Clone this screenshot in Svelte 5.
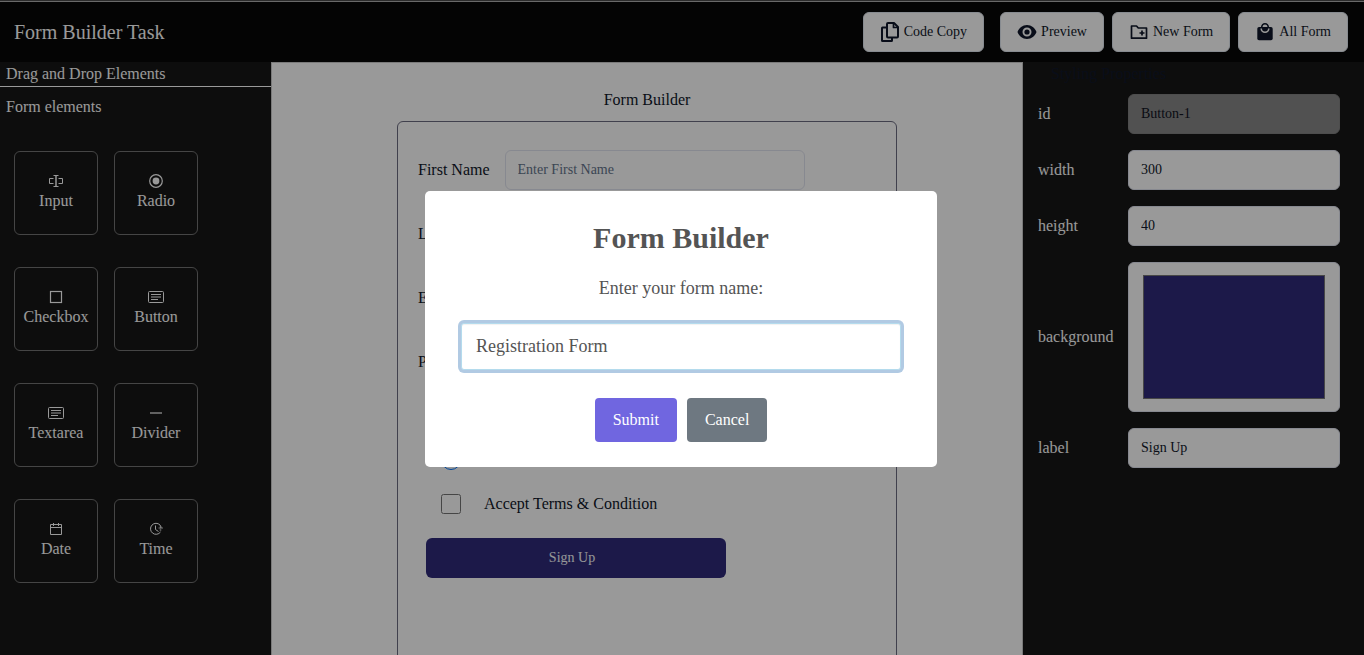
<script>
  const elements = [
    { name: 'Input', icon: 'input' },
    { name: 'Radio', icon: 'radio' },
    { name: 'Checkbox', icon: 'checkbox' },
    { name: 'Button', icon: 'card' },
    { name: 'Textarea', icon: 'card' },
    { name: 'Divider', icon: 'divider' },
    { name: 'Date', icon: 'date' },
    { name: 'Time', icon: 'time' }
  ];

  const fields = [
    { id: 'first-name', label: 'First Name', type: 'text' },
    { id: 'last-name', label: 'Last Name', type: 'text' },
    { id: 'email', label: 'Email', type: 'email' },
    { id: 'password', label: 'Password', type: 'password' }
  ];

  let props = $state({ id: 'Button-1', width: '300', height: '40', background: '#2f2b7b', label: 'Sign Up' });
  let formName = $state('Registration Form');
  let gender = $state('Female');
</script>

<div class="app">
  <header class="topbar">
    <h1>Form Builder Task</h1>
    <nav class="actions">
      <button class="action spaced" type="button">
        <svg viewBox="0 0 20 20" fill="none" stroke="currentColor" stroke-width="2" stroke-linejoin="round">
          <path d="M6 5.500H2.500Q2 5.500 2 6V18.500Q2 19 2.500 19H11.500Q12 19 12 18.500V16" />
          <path d="M8 1H14L18 5V14.500Q18 15.500 17 15.500H8Q7 15.500 7 14.500V2Q7 1 8 1Z" />
          <path d="M13.500 1V5.500H18" stroke-width="1.700" />
        </svg>
        Code Copy
      </button>
      <button class="action" type="button">
        <svg viewBox="0 0 20 20" fill="currentColor">
          <path fill-rule="evenodd" d="M10 3C5.500 3 2 6 .5 10 2 14 5.500 17 10 17S18 14 19.500 10C18 6 14.500 3 10 3ZM10 14.500A4.500 4.500 0 1 1 10 5.500 4.500 4.500 0 0 1 10 14.500Z" />
          <circle cx="10" cy="10" r="2.600" />
        </svg>
        Preview
      </button>
      <button class="action" type="button">
        <svg viewBox="0 0 20 20" fill="none" stroke="currentColor" stroke-width="1.700" stroke-linejoin="round">
          <path d="M2.500 4H7.500L9.300 6H17.500V16.200H2.500Z" />
          <path d="M13 8.500V13.500M10.500 11H15.500" />
        </svg>
        New Form
      </button>
      <button class="action" type="button">
        <svg viewBox="0 0 20 20">
          <path fill="currentColor" d="M4 5H16Q17.700 5 17.700 6.700V16.500Q17.700 18.200 16 18.200H4Q2.300 18.200 2.300 16.500V6.700Q2.300 5 4 5Z" />
          <path fill="none" stroke="currentColor" stroke-width="1.600" d="M6.700 5.500A3.300 3.800 0 0 1 13.300 5.500" />
          <path class="handle" fill="none" stroke-width="1.600" d="M6.200 6.500A3.800 3.800 0 0 0 13.800 6.500" />
        </svg>
        All Form
      </button>
    </nav>
  </header>

  <div class="workspace">
    <aside class="palette">
      <h2>Drag and Drop Elements</h2>
      <h3>Form elements</h3>
      <div class="tiles">
        {#each elements as el}
          <button class="tile" type="button" draggable="true">
            <svg viewBox="0 0 16 16" fill="none" stroke="currentColor">
              {#if el.icon === 'input'}
                <path d="M5.500 5.500H1.500V10.500H5.500M10.500 5.500H14.500V10.500H10.500M5.500 2.500H10.500M5.500 13.500H10.500" />
                <path d="M8 2.500V13.500" stroke-width="1.500" />
              {:else if el.icon === 'radio'}
                <circle cx="8" cy="8" r="6.300" stroke-width="1.200" />
                <circle cx="8" cy="8" r="3.400" fill="currentColor" stroke="none" />
              {:else if el.icon === 'checkbox'}
                <rect x="2.500" y="2.500" width="11" height="11" stroke-width="1.200" />
              {:else if el.icon === 'card'}
                <rect x=".5" y="2.500" width="15" height="11" rx="1" />
                <path d="M3 5.500H13M3 10.500H10" />
                <path d="M3 8H13" stroke-width="2" opacity=".5" />
              {:else if el.icon === 'divider'}
                <path d="M2 8H14" stroke-width="2" opacity=".6" />
              {:else if el.icon === 'date'}
                <path d="M2.500 3.500H13.500V13.500H2.500ZM2.500 6.500H13.500M5.500 2V5M10.500 2V5" />
              {:else}
                <path d="M12 4A5.500 5.500 0 1 0 12.500 11M7.500 4.500V8.500L10.500 10.500M12 4Q13 5.500 13 7" />
                <path d="M10.500 7H15M12.500 5V10" stroke-width="1.500" opacity=".5" />
              {/if}
            </svg>
            <span>{el.name}</span>
          </button>
        {/each}
      </div>
    </aside>

    <main class="canvas">
      <h2>Form Builder</h2>
      <form class="sheet">
        {#each fields as field}
          <div class="field">
            <label for={field.id}>{field.label}</label>
            <input class="box" id={field.id} type={field.type} placeholder="Enter {field.label}" />
          </div>
        {/each}
        {#each ['Male', 'Female'] as option}
          <label class="choice">
            <input type="radio" name="gender" value={option} bind:group={gender} />
            <span>{option}</span>
          </label>
        {/each}
        <label class="choice">
          <input type="checkbox" />
          <span>Accept Terms &amp; Condition</span>
        </label>
        <button
          class="signup"
          type="button"
          style="width: {props.width}px; height: {props.height}px; background: {props.background}"
        >{props.label}</button>
      </form>
    </main>

    <aside class="inspector">
      <h2>Styling Properties</h2>
      <div class="property">
        <label for="prop-id">id</label>
        <input class="box" id="prop-id" value={props.id} disabled />
      </div>
      <div class="property">
        <label for="prop-width">width</label>
        <input class="box" id="prop-width" bind:value={props.width} />
      </div>
      <div class="property">
        <label for="prop-height">height</label>
        <input class="box" id="prop-height" bind:value={props.height} />
      </div>
      <div class="property">
        <label for="prop-background">background</label>
        <input class="box color" id="prop-background" type="color" bind:value={props.background} />
      </div>
      <div class="property">
        <label for="prop-label">label</label>
        <input class="box" id="prop-label" bind:value={props.label} />
      </div>
    </aside>
  </div>
</div>

<div class="overlay">
  <div class="dialog" role="dialog" aria-modal="true" aria-labelledby="dialog-title">
    <h2 id="dialog-title">Form Builder</h2>
    <label for="form-name">Enter your form name:</label>
    <input id="form-name" type="text" bind:value={formName} />
    <div class="dialog-actions">
      <button class="submit" type="button">Submit</button>
      <button class="cancel" type="button">Cancel</button>
    </div>
  </div>
</div>

<style>
  :global(body) {
    margin: 0;
    background: #171717;
  }

  .app,
  .overlay {
    font-family: 'Liberation Serif', serif;
    font-size: 16px;
    line-height: 24px;
  }

  .app *,
  .overlay * {
    box-sizing: border-box;
  }

  h1,
  h2,
  h3 {
    margin: 0;
    font-size: 16px;
    font-weight: 400;
  }

  button,
  input {
    font-family: inherit;
    margin: 0;
  }

  .app {
    display: flex;
    flex-direction: column;
    height: 100vh;
    overflow: hidden;
    color: #0f172a;
    box-sizing: border-box;
    border-top: 1px solid #4a4a4a;
  }

  .topbar {
    display: flex;
    align-items: center;
    justify-content: space-between;
    padding: 10px 16px 10px 14px;
    background: #080808;
    border-top: 1px solid #b0b0b0;
  }

  .topbar h1 {
    color: #fff;
    font-size: 20px;
  }

  .actions {
    display: flex;
    gap: 8px;
  }

  .action {
    display: flex;
    align-items: center;
    gap: 4px;
    height: 40px;
    padding: 0 16px;
    border: 1px solid #e2e8f0;
    border-radius: 6px;
    background: #fff;
    color: #0f172a;
    font-size: 14px;
    line-height: 20px;
    white-space: nowrap;
  }

  .action svg {
    width: 20px;
    height: 20px;
  }

  .spaced {
    margin-right: 8px;
  }

  .handle {
    stroke: #fff;
  }

  .workspace {
    display: grid;
    grid-template-columns: 271px 1fr 25%;
    flex: 1;
    min-height: 0;
  }

  .palette,
  .inspector {
    background: #171717;
    color: #fff;
  }

  .palette h2 {
    padding-left: 6px;
    border-bottom: 1px solid #fff;
  }

  .palette h3 {
    padding: 8px 6px;
  }

  .tiles {
    display: grid;
    grid-template-columns: 84px 84px;
    gap: 32px 16px;
    padding: 24px 14px;
  }

  .tile {
    display: flex;
    flex-direction: column;
    align-items: center;
    justify-content: center;
    height: 84px;
    padding: 0;
    border: 1px solid #737373;
    border-radius: 6px;
    background: none;
    color: #fff;
    font-size: 16px;
    line-height: 24px;
  }

  .tile svg {
    width: 16px;
    height: 16px;
  }

  .canvas {
    display: flex;
    flex-direction: column;
    align-items: center;
    gap: 9px;
    overflow: hidden;
    padding-top: 25px;
    border: 1px solid #ccc;
    border-bottom: 0;
    background: #fff;
  }

  .sheet {
    display: flex;
    flex-direction: column;
    flex-shrink: 0;
    gap: 24px;
    width: 500px;
    max-width: 100%;
    min-height: 600px;
    padding: 28px 20px;
    border: 1px solid #6b6b80;
    border-radius: 6px;
  }

  .field {
    display: flex;
    align-items: center;
    gap: 15px;
  }

  .box {
    width: 300px;
    height: 40px;
    padding: 8px 12px;
    border: 1px solid #e2e4f0;
    border-radius: 6px;
    background: #fff;
    color: #0f172a;
    font-size: 14px;
    line-height: 20px;
  }

  .box::placeholder {
    color: #64748b;
  }

  .choice {
    display: flex;
    align-items: center;
    gap: 23px;
    height: 20px;
    padding-left: 23px;
  }

  .choice input {
    width: 20px;
    height: 20px;
  }

  .signup {
    margin-left: 8px;
    padding: 0 16px 0 8px;
    border: 0;
    border-radius: 6px;
    color: #f8fafc;
    font-size: 14px;
  }

  .inspector {
    display: flex;
    flex-direction: column;
    gap: 16px;
    padding: 0 24px 0 15px;
  }

  .inspector h2 {
    margin-bottom: -8px;
    padding-left: 13px;
    color: #0f172a;
  }

  .property {
    display: grid;
    grid-template-columns: 74px 1fr;
    gap: 16px;
    align-items: center;
  }

  .property .box {
    width: 100%;
  }

  .property .box:disabled {
    background: #888;
    border-color: #808080;
    color: #10131f;
  }

  .property .color {
    height: 150px;
  }

  .overlay {
    position: fixed;
    inset: 0;
    display: flex;
    align-items: center;
    justify-content: center;
    padding: 3px 2px 0 0;
    background: rgba(0, 0, 0, 0.4);
  }

  .dialog {
    display: flex;
    flex-direction: column;
    width: 512px;
    max-width: 100%;
    padding: 24px 36px 25px;
    border-radius: 5px;
    background: #fff;
    color: #545454;
    text-align: center;
  }

  .dialog h2 {
    font-size: 30px;
    font-weight: 700;
    line-height: 45px;
  }

  .dialog label {
    padding: 15px 0 21px;
    font-size: 18px;
    line-height: 27px;
  }

  .dialog input {
    height: 47px;
    padding: 0 14px;
    border: 1px solid #b4dbed;
    border-radius: 3px;
    outline: 0;
    background: #fff;
    box-shadow: inset 0 1px 1px rgba(0, 0, 0, 0.06), 0 0 0 3px rgba(100, 150, 200, 0.5);
    color: #545454;
    font-size: 18px;
  }

  .dialog-actions {
    display: flex;
    justify-content: center;
    gap: 10px;
    padding-top: 28px;
  }

  .dialog-actions button {
    height: 44px;
    padding: 0 18px;
    border: 0;
    border-radius: 4px;
    color: #fff;
    font-size: 16px;
  }

  .submit {
    background: #7066e0;
  }

  .cancel {
    background: #6e7881;
  }
</style>
